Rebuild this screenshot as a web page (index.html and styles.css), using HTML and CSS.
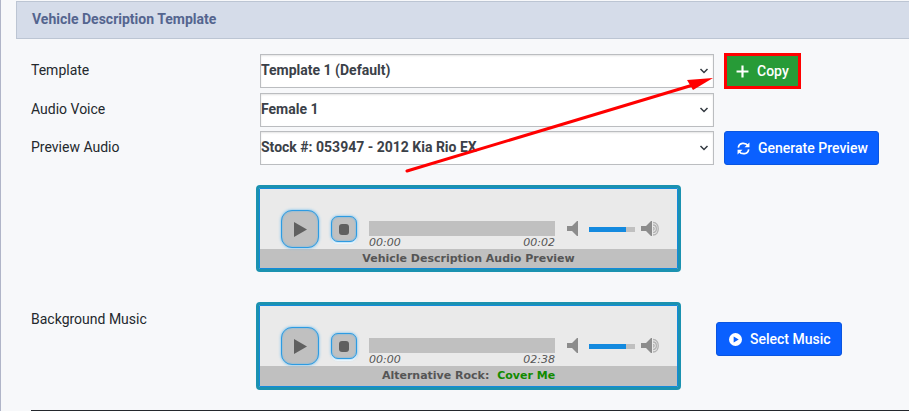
FILE: index.html
```html
<!DOCTYPE html>
<html lang="en">
<head>
    <meta charset="UTF-8">
    <meta name="viewport" content="width=device-width, initial-scale=1.0">
    <title>Vehicle Description Template</title>
    <link rel="stylesheet" href="styles.css">
</head>
<body>
    <svg class="symbols" aria-hidden="true">
        <symbol id="chevron" viewBox="0 0 10 8"><path d="M1.500 2 5 5.500 8.500 2" fill="none" stroke="#333940" stroke-width="1.500"/></symbol>
        <symbol id="vol-low" viewBox="0 0 12 16"><path d="M0 5h5l5-5h1v15h-1l-5-5H0z" fill="#8c8c8c"/></symbol>
        <symbol id="vol-high" viewBox="0 0 20 16">
            <path d="M0 5h5l5-5h1v15h-1l-5-5H0z" fill="#8c8c8c"/>
            <path d="M12 1.500c7 0 7 12.500 0 12.500M12 4c4.500 0 4.500 7.500 0 7.500M12 6.500c1.500 0 1.500 2.500 0 2.500" fill="none" stroke="#b4b4b4" stroke-width="1.400"/>
        </symbol>
    </svg>

    <div class="panel">
        <h2 class="panel-title">Vehicle Description Template</h2>

        <div class="panel-body">
            <div class="form-grid">
                <label for="template">Template</label>
                <div class="select-wrap">
                    <select id="template"><option>Template 1 (Default)</option></select>
                    <svg class="chevron"><use href="#chevron"/></svg>
                </div>
                <button type="button" class="btn btn-copy">
                    <svg class="icon" viewBox="0 0 12 12"><path d="M6 .5v11M.5 6h11" stroke="#fff" stroke-width="2"/></svg>
                    Copy
                </button>

                <label for="voice">Audio Voice</label>
                <div class="select-wrap">
                    <select id="voice"><option>Female 1</option></select>
                    <svg class="chevron"><use href="#chevron"/></svg>
                </div>
                <span></span>

                <label for="preview">Preview Audio</label>
                <div class="select-wrap">
                    <select id="preview"><option>Stock #: 053947 - 2012 Kia Rio EX</option></select>
                    <svg class="chevron"><use href="#chevron"/></svg>
                </div>
                <button type="button" class="btn">
                    <svg class="icon" viewBox="0 0 512 512" fill="none" stroke="#fff" stroke-width="66"><path d="M52 220C80 20 330 0 440 150M460 292C432 492 182 512 72 362"/><path d="M490 15V210H295zM22 497V302H217z" fill="#fff" stroke="none"/></svg>
                    Generate Preview
                </button>
            </div>

            <div class="player-row">
                <span></span>
                <div class="player">
                    <div class="controls">
                        <button type="button" class="play" aria-label="Play"><svg viewBox="0 0 13 15"><path d="M0 0 13 7.500 0 15z" fill="#606060"/></svg></button>
                        <button type="button" class="stop" aria-label="Stop"><span></span></button>
                        <div class="track">
                            <div class="progress"></div>
                            <div class="times"><span>00:00</span><span>00:02</span></div>
                        </div>
                        <div class="volume">
                            <svg class="vol-low"><use href="#vol-low"/></svg>
                            <div class="volume-bar"><div class="volume-value"></div></div>
                            <svg class="vol-high"><use href="#vol-high"/></svg>
                        </div>
                    </div>
                    <div class="player-title">Vehicle Description Audio Preview</div>
                </div>
            </div>

            <div class="player-row">
                <span class="music-label">Background Music</span>
                <div class="player">
                    <div class="controls">
                        <button type="button" class="play" aria-label="Play"><svg viewBox="0 0 13 15"><path d="M0 0 13 7.500 0 15z" fill="#606060"/></svg></button>
                        <button type="button" class="stop" aria-label="Stop"><span></span></button>
                        <div class="track">
                            <div class="progress"></div>
                            <div class="times"><span>00:00</span><span>02:38</span></div>
                        </div>
                        <div class="volume">
                            <svg class="vol-low"><use href="#vol-low"/></svg>
                            <div class="volume-bar"><div class="volume-value"></div></div>
                            <svg class="vol-high"><use href="#vol-high"/></svg>
                        </div>
                    </div>
                    <div class="player-title tall">Alternative Rock: <span class="song">Cover Me</span></div>
                </div>
                <button type="button" class="btn btn-music">
                    <svg class="icon" viewBox="0 0 12 12"><path fill="#fff" fill-rule="evenodd" d="M6 0a6 6 0 1 0 0 12A6 6 0 0 0 6 0zM4.300 3.200 9 6 4.300 8.800z"/></svg>
                    Select Music
                </button>
            </div>
        </div>

        <svg class="arrow" viewBox="0 0 310 100" aria-hidden="true">
            <path d="M2 96 288 10" stroke="#f00" stroke-width="3" stroke-linecap="round"/>
            <path d="M308 3 282 5 288 15z" fill="#f00"/>
        </svg>
    </div>
</body>
</html>
```
FILE: styles.css
```css
* {
    box-sizing: border-box;
}
body {
    margin: 0;
    background: #f7f8fa;
    color: #24282d;
    font-family: Roboto, "Liberation Sans", sans-serif;
    font-size: 14px;
    line-height: 20px;
}
.symbols {
    display: none;
}
.panel {
    position: relative;
    padding: 1px 0 0 15px;
    border-left: 1px solid #b0b5c8;
}
.panel-title {
    margin: 0;
    padding: 7px 15px 9px;
    background: #d5dce9;
    border: 1px solid #bcc5d3;
    border-right: none;
    color: #54658f;
    font-size: 14px;
    font-weight: 700;
    line-height: 20px;
}
.panel-body {
    margin-left: 15px;
    padding-top: 15px;
    border-bottom: 1px solid #24282d;
}

/* form */
.form-grid {
    display: grid;
    grid-template-columns: 219px 1fr 185px;
    grid-template-rows: 35px;
    gap: 4px 10px;
    align-items: start;
    justify-items: start;
}
.form-grid label {
    padding-top: 6px;
}
.select-wrap {
    position: relative;
    width: 100%;
}
select {
    display: block;
    appearance: none;
    width: 100%;
    height: 34px;
    padding: 0 24px 2px 0;
    background: #fff;
    border: 1px solid #bbbdc0;
    border-radius: 0;
    box-shadow: inset 0 1px 2px #e4e4e4;
    color: #3b4148;
    font: 700 14px Roboto, "Liberation Sans", sans-serif;
}
.chevron {
    position: absolute;
    top: 13px;
    right: 5px;
    width: 10px;
    height: 8px;
    pointer-events: none;
}
.btn {
    display: flex;
    align-items: center;
    gap: 8px;
    height: 34px;
    padding: 0 10px 0 12px;
    background: #0a60ff;
    border: 1px solid #0a55e0;
    border-radius: 3px;
    color: #fff;
    font: 500 14px Roboto, "Liberation Sans", sans-serif;
    white-space: nowrap;
    cursor: pointer;
}
.btn-copy {
    margin-left: 1px;
    padding: 0 11px;
    background: #279b37;
    border: none;
    border-radius: 0;
    outline: 3px solid #f00;
    outline-offset: -2px;
}
.icon {
    width: 13px;
    height: 13px;
}

/* audio players */
.player-row {
    display: grid;
    grid-template-columns: 225px minmax(0, 425px) auto;
    justify-items: start;
    align-items: start;
    padding: 20px 0 10px;
}
.player-row + .player-row {
    padding-bottom: 20px;
}
.music-label {
    padding-top: 7px;
}
.btn-music {
    margin: 20px 0 0 35px;
}
.player {
    width: 100%;
    background: #eaeaea;
    border: 3px solid #1b92b0;
    border-radius: 4px;
    box-shadow: inset 0 0 0 1px #148adb;
    padding: 1px;
    font-family: Verdana, "DejaVu Sans", sans-serif;
    font-size: 11px;
    color: #555;
}
.controls {
    display: flex;
    align-items: flex-start;
    height: 60px;
    padding: 21px 16px 0 21px;
}
.play,
.stop {
    display: flex;
    flex: none;
    align-items: center;
    justify-content: center;
    padding: 0;
    background: #c0c0c0;
    border: 1px solid #2d9be2;
    box-shadow: 0 0 3px #5db8f0, inset 0 0 2px #5db8f0;
}
.play {
    width: 38px;
    height: 38px;
    border-radius: 11px;
}
.play svg {
    width: 13px;
    height: 15px;
}
.stop {
    width: 26px;
    height: 26px;
    margin: 6px 0 0 12px;
    border-radius: 7px;
    box-shadow: 0 0 3px #5db8f0, inset 0 0 2px #5db8f0, 0 2px #fff;
}
.stop span {
    width: 10px;
    height: 11px;
    background: #606060;
    border-radius: 3px;
}
.track {
    flex: 1;
    margin: 11px 12px 0;
}
.progress {
    height: 15px;
    background: #c0c0c0;
}
.times {
    display: flex;
    justify-content: space-between;
    font-style: italic;
    line-height: 13px;
}
.volume {
    display: flex;
    align-items: center;
    height: 16px;
    margin-top: 11px;
}
.vol-low {
    width: 12px;
    height: 16px;
}
.vol-high {
    width: 20px;
    height: 16px;
}
.volume-bar {
    width: 46px;
    height: 5px;
    margin: 0 6px 0 10px;
    background: #c0c0c0;
}
.volume-value {
    width: 80%;
    height: 100%;
    background: #148adf;
}
.player-title {
    background: #c0c0c0;
    font-weight: 700;
    line-height: 19px;
    text-align: center;
}
.player-title.tall {
    line-height: 20px;
}
.song {
    margin-left: 4px;
    color: #128a00;
}

/* pointer to the copy button */
.arrow {
    position: absolute;
    top: 75px;
    left: 404px;
    width: 310px;
    height: 100px;
    pointer-events: none;
}
```
